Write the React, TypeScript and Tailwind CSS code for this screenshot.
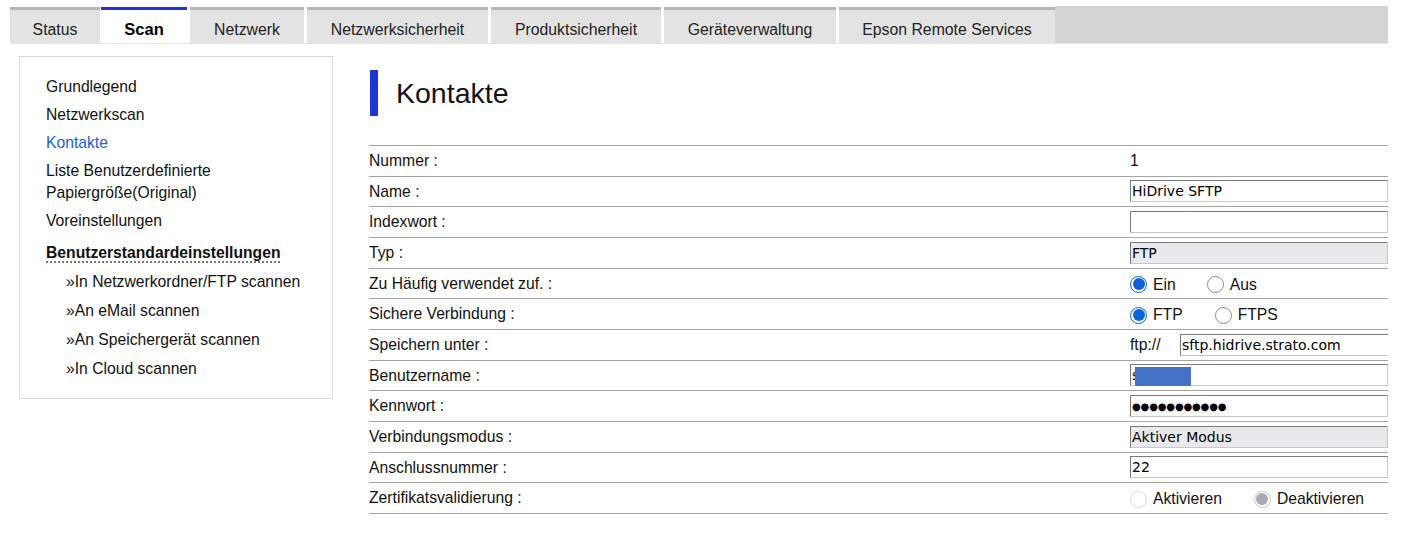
import React from 'react';

const tabs = [
    { label: 'Status', w: 'w-[90px]', ml: '' },
    { label: 'Scan', w: 'w-[86px]', ml: 'ml-[1px]', active: true },
    { label: 'Netzwerk', w: 'w-[114px]', ml: 'ml-[3px]' },
    { label: 'Netzwerksicherheit', w: 'w-[181px]', ml: 'ml-[3px]' },
    { label: 'Produktsicherheit', w: 'w-[170px]', ml: 'ml-[3px]' },
    { label: 'Geräteverwaltung', w: 'w-[172px]', ml: 'ml-[3px]' },
    { label: 'Epson Remote Services', w: 'w-[216px]', ml: 'ml-[3px]' },
];

function Radio({ checked = false, disabled = false }: { checked?: boolean; disabled?: boolean }) {
    if (checked && disabled) {
        return (
            <span className="flex h-[17px] w-[17px] items-center justify-center rounded-full border border-[#c4c4cc] bg-white">
                <span className="h-[12px] w-[12px] rounded-full bg-[#a9a9b3]" />
            </span>
        );
    }
    if (checked) {
        return (
            <span className="flex h-[17px] w-[17px] items-center justify-center rounded-full border border-[#0b5fd6] bg-white">
                <span className="h-[12px] w-[12px] rounded-full bg-[#0b62d9]" />
            </span>
        );
    }
    return (
        <span
            className={
                disabled
                    ? 'h-[17px] w-[17px] rounded-full border border-[#d6d6d6] bg-white'
                    : 'h-[17px] w-[17px] rounded-full border border-[#8a8a8a] bg-white'
            }
        />
    );
}

function RadioOption({ label, checked, disabled, className }: { label: string; checked?: boolean; disabled?: boolean; className?: string }) {
    return (
        <span className={`flex items-center gap-[6px] ${className ?? ''}`}>
            <Radio checked={checked} disabled={disabled} />
            <span className="text-[15.7px] text-[#111]">{label}</span>
        </span>
    );
}

function TextBox({ children, gray = false, className = '' }: { children?: React.ReactNode; gray?: boolean; className?: string }) {
    return (
        <div
            className={`relative flex h-[22px] w-[320px] items-center border border-t-[#7a7a7a] border-l-[#7a7a7a] border-b-[#c8c8c8] border-r-[#c8c8c8] px-[1px] pt-[1px] font-['DejaVu_Sans',sans-serif] text-[14px] text-black ${gray ? 'bg-[#e9e9ed]' : 'bg-white'} ${className}`}
        >
            {children}
        </div>
    );
}

const rows: { label: string; value: React.ReactNode }[] = [
    { label: 'Nummer :', value: <span className="text-[15.7px]">1</span> },
    { label: 'Name :', value: <TextBox>HiDrive SFTP</TextBox> },
    { label: 'Indexwort :', value: <TextBox /> },
    { label: 'Typ :', value: <TextBox gray>FTP</TextBox> },
    {
        label: 'Zu Häufig verwendet zuf. :',
        value: (
            <div className="flex items-center pt-[2px]">
                <RadioOption label="Ein" checked />
                <RadioOption label="Aus" className="ml-[31px]" />
            </div>
        ),
    },
    {
        label: 'Sichere Verbindung :',
        value: (
            <div className="flex items-center pt-[2px]">
                <RadioOption label="FTP" checked />
                <RadioOption label="FTPS" className="ml-[32px]" />
            </div>
        ),
    },
    {
        label: 'Speichern unter :',
        value: (
            <div className="flex items-center">
                <span className="w-[50px] text-[15.7px] text-[#111]">ftp://</span>
                <TextBox>sftp.hidrive.strato.com</TextBox>
            </div>
        ),
    },
    {
        label: 'Benutzername :',
        value: (
            <TextBox>
                s
                <span className="absolute left-[4px] top-[2px] h-[19px] w-[56px] bg-[#4472c4]" />
            </TextBox>
        ),
    },
    {
        label: 'Kennwort :',
        value: (
            <TextBox>
                <span className="text-[10px] tracking-[-0.15px]">●●●●●●●●●●●</span>
            </TextBox>
        ),
    },
    { label: 'Verbindungsmodus :', value: <TextBox gray>Aktiver Modus</TextBox> },
    { label: 'Anschlussnummer :', value: <TextBox>22</TextBox> },
    {
        label: 'Zertifikatsvalidierung :',
        value: (
            <div className="flex items-center pt-[2px]">
                <RadioOption label="Aktivieren" disabled />
                <RadioOption label="Deaktivieren" checked disabled className="ml-[32px]" />
            </div>
        ),
    },
];

export default function App() {
    return (
        <div className="h-[540px] w-[1401px] overflow-hidden bg-white pl-[10px] pr-[13px] pt-[6px] font-['Liberation_Sans',Arial,sans-serif] text-[#111]">
            {/* Tab bar */}
            <div className="flex h-[38px] border-b border-[#e6e6e6]">
                <div className="flex items-end">
                    {tabs.map((t) => (
                        <div
                            key={t.label}
                            className={`flex h-[36px] items-center justify-center border-t-[3px] pt-[6px] ${t.w} ${t.ml} ${
                                t.active
                                    ? 'border-[#1f34cf] bg-white text-[16.5px] font-bold text-black'
                                    : 'border-[#b7b7b7] bg-[#e3e3e3] text-[15.8px] text-[#222]'
                            }`}
                        >
                            {t.label}
                        </div>
                    ))}
                </div>
                <div className="flex-1 bg-[#d4d4d4]" />
            </div>

            <div className="mt-[12px] flex">
                {/* Sidebar */}
                <div className="ml-[9px] h-[343px] w-[314px] shrink-0 border border-[#dcdcdc] pl-[26px] pt-[16px] text-[15.7px] leading-[22px]">
                    <div className="py-[3px]">Grundlegend</div>
                    <div className="py-[3px]">Netzwerkscan</div>
                    <div className="py-[3px] text-[#1a5fd4]">Kontakte</div>
                    <div className="py-[3px]">
                        Liste Benutzerdefinierte
                        <br />
                        Papiergröße(Original)
                    </div>
                    <div className="py-[3px]">Voreinstellungen</div>
                    <div className="mt-[4px] py-[3px]">
                        <span className="font-bold underline decoration-dotted decoration-[#555] underline-offset-[4px]">
                            Benutzerstandardeinstellungen
                        </span>
                    </div>
                    <div className="pl-[20px]">
                        <div className="py-[3.5px]">»In Netzwerkordner/FTP scannen</div>
                        <div className="py-[3.5px]">»An eMail scannen</div>
                        <div className="py-[3.5px]">»An Speichergerät scannen</div>
                        <div className="py-[3.5px]">»In Cloud scannen</div>
                    </div>
                </div>

                {/* Main */}
                <div className="ml-[36px] min-w-0 flex-1 overflow-hidden pt-[14px]">
                    <div className="flex h-[46px] items-center">
                        <div className="ml-[1px] h-[46px] w-[8px] bg-[#1b35d6]" />
                        <h1 className="ml-[18px] text-[28.5px] leading-none text-[#111]">Kontakte</h1>
                    </div>

                    <div className="mt-[29px] border-t border-[#a3a3a3]">
                        {rows.map((r) => (
                            <div key={r.label} className="flex h-[30.67px] items-center border-b border-[#a3a3a3]">
                                <div className="w-[761px] shrink-0 text-[15.7px] text-[#111]">{r.label}</div>
                                <div className="flex min-w-0 flex-1 items-center whitespace-nowrap">{r.value}</div>
                            </div>
                        ))}
                    </div>
                </div>
            </div>
        </div>
    );
}
